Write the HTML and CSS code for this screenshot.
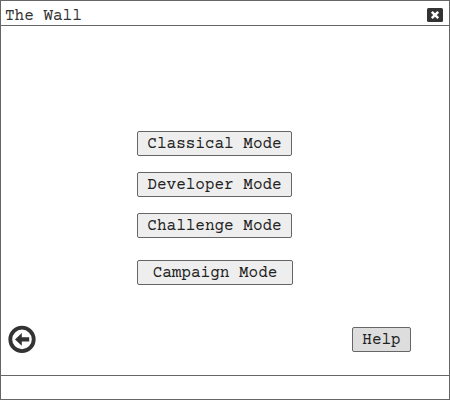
FILE: index.html
```html
<!DOCTYPE html>
<html lang="en">
<head><meta charset="utf-8"><title>The Wall</title><link rel="stylesheet" href="styles.css"></head>
<body>
<div class="window">
  <header class="titlebar">
    <span>The Wall</span>
    <svg width="16" height="14" viewBox="0 0 16 14"><rect width="16" height="14" rx="1.5" fill="#333"/><path d="M4.8 3.8l6.4 6.4M11.2 3.8l-6.4 6.4" stroke="#fff" stroke-width="2.5"/></svg>
  </header>
  <main class="content">
    <nav class="modes">
      <button class="btn">Classical Mode</button>
      <button class="btn">Developer Mode</button>
      <button class="btn">Challenge Mode</button>
      <button class="btn campaign">Campaign Mode</button>
    </nav>
    <div class="actions">
      <svg width="28" height="28" viewBox="0 0 28 28"><circle cx="14" cy="14.4" r="11.7" fill="none" stroke="#333" stroke-width="3.8"/><path d="M7 14.4l6.8-6.4v4.3h7.4v4.2h-7.4v4.3z" fill="#333"/></svg>
      <button class="btn help">Help</button>
    </div>
  </main>
  <footer class="status"></footer>
</div>
</body>
</html>
```
FILE: styles.css
```css
* { box-sizing: border-box; }
body { margin: 0; }
.window { width: 450px; height: 400px; border: 1px solid #666; display: flex; flex-direction: column; background: #fff; color: #333; font: 16px "Courier 10 Pitch", "Courier Prime", "Liberation Mono", monospace; }
.titlebar { height: 25px; border-bottom: 1px solid #666; display: flex; justify-content: space-between; align-items: center; padding: 4px 6px 0 4px; }
.titlebar span { padding-top: 1px; }
.content { flex: 1; display: flex; flex-direction: column; }
.modes { display: flex; flex-direction: column; gap: 16px; margin: 105px 0 0 136px; }
.btn { width: 155px; height: 25px; padding: 0; border: 1px solid #666; border-radius: 2px; background: #eee; color: #222; font: inherit; }
.campaign { width: 156px; margin-top: 6px; }
.actions { display: flex; justify-content: space-between; align-items: flex-end; margin: 40px 38px 0 7px; }
.help { width: 59px; margin-bottom: 1px; background: #ddd; }
.status { height: 24px; border-top: 1px solid #666; }
```
